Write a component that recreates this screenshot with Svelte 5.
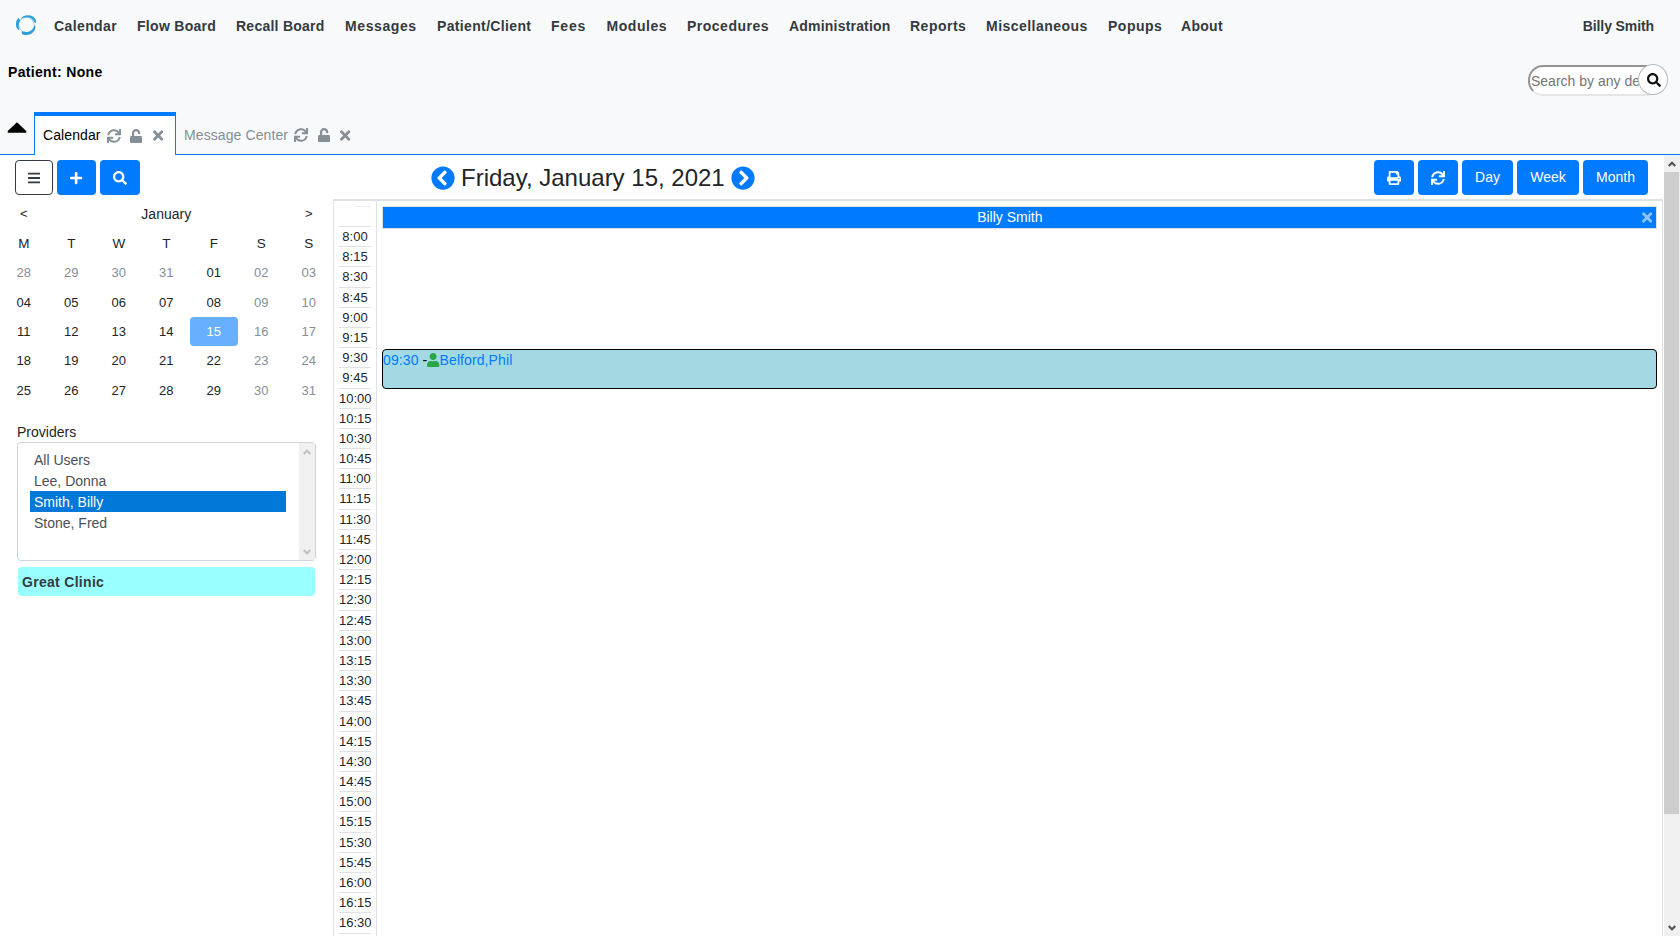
<script>
  // label, slot width and tracking of every top menu entry
  const menu = [
    ['Calendar', 83, .4], ['Flow Board', 99, .3], ['Recall Board', 109, .25], ['Messages', 92, .6],
    ['Patient/Client', 114, .35], ['Fees', 55.5, .8], ['Modules', 80.5, .55], ['Procedures', 102, .5],
    ['Administration', 121, .2], ['Reports', 76, .5], ['Miscellaneous', 122, .47], ['Popups', 73, .5], ['About', 50, .3]
  ];
  const tabs = ['Calendar', 'Message Center'];
  const weekdays = ['M', 'T', 'W', 'T', 'F', 'S', 'S'];
  const days = [28, 29, 30, 31, ...Array.from({ length: 31 }, (_, i) => i + 1)];
  const pad = (n) => String(n).padStart(2, '0');
  const isMuted = (i) => i < 4 || i % 7 > 4;
  const times = Array.from({ length: 35 }, (_, i) => `${8 + Math.floor(i / 4)}:${pad((i % 4) * 15)}`);
  const providers = ['All Users', 'Lee, Donna', 'Smith, Billy', 'Stone, Fred'];

  const icons = {
    sync: [512, 'M440.65 12.57l4 82.77A247.16 247.16 0 0 0 255.83 8C134.73 8 33.91 94.92 12.29 209.82A12 12 0 0 0 24.09 224h49.05a12 12 0 0 0 11.67-9.26 175.91 175.91 0 0 1 317-56.94l-101.46-4.86a12 12 0 0 0-12.57 12v47.41a12 12 0 0 0 12 12H500a12 12 0 0 0 12-12V12a12 12 0 0 0-12-12h-47.37a12 12 0 0 0-11.98 12.57zM255.83 432a175.61 175.61 0 0 1-146-77.8l101.8 4.87a12 12 0 0 0 12.57-12v-47.4a12 12 0 0 0-12-12H12a12 12 0 0 0-12 12V500a12 12 0 0 0 12 12h47.35a12 12 0 0 0 12-12.6l-4.15-82.57A247.17 247.17 0 0 0 255.83 504c121.11 0 221.93-86.92 243.55-201.82a12 12 0 0 0-11.8-14.18h-49.05a12 12 0 0 0-11.67 9.26A175.86 175.86 0 0 1 255.83 432z'],
    unlock: [448, 'M400 256H152V152.9c0-39.6 31.7-72.5 71.3-72.9 40-.4 72.7 32.1 72.7 72v16c0 13.3 10.7 24 24 24h32c13.3 0 24-10.7 24-24v-16C376 68 307.5-.3 223.5 0 139.5.3 72 69.5 72 153.5V256H48c-26.5 0-48 21.5-48 48v160c0 26.5 21.5 48 48 48h352c26.5 0 48-21.5 48-48V304c0-26.5-21.5-48-48-48z'],
    times: [352, 'M242.72 256l100.07-100.07c12.28-12.28 12.28-32.19 0-44.48l-22.24-22.24c-12.28-12.28-32.19-12.28-44.48 0L176 189.28 75.93 89.21c-12.28-12.28-32.19-12.28-44.48 0L9.21 111.45c-12.28 12.28-12.28 32.19 0 44.48L109.28 256 9.21 356.07c-12.28 12.28-12.28 32.19 0 44.48l22.24 22.24c12.28 12.28 32.2 12.28 44.48 0L176 322.72l100.07 100.07c12.28 12.28 32.2 12.28 44.48 0l22.24-22.24c12.28-12.28 12.28-32.19 0-44.48L242.72 256z'],
    bars: [448, 'M16 132h416c8.8 0 16-7.2 16-16V76c0-8.8-7.2-16-16-16H16C7.2 60 0 67.2 0 76v40c0 8.8 7.2 16 16 16zm0 160h416c8.8 0 16-7.2 16-16v-40c0-8.8-7.2-16-16-16H16c-8.8 0-16 7.2-16 16v40c0 8.8 7.2 16 16 16zm0 160h416c8.8 0 16-7.2 16-16v-40c0-8.8-7.2-16-16-16H16c-8.8 0-16 7.2-16 16v40c0 8.8 7.2 16 16 16z'],
    plus: [448, 'M416 208H272V64c0-17.67-14.33-32-32-32h-32c-17.67 0-32 14.33-32 32v144H32c-17.67 0-32 14.33-32 32v32c0 17.67 14.33 32 32 32h144v144c0 17.67 14.33 32 32 32h32c17.67 0 32-14.33 32-32V304h144c17.67 0 32-14.33 32-32v-32c0-17.67-14.33-32-32-32z'],
    search: [512, 'M505 442.7L405.3 343c-4.5-4.5-10.6-7-17-7H372c27.6-35.3 44-79.7 44-128C416 93.1 322.9 0 208 0S0 93.1 0 208s93.1 208 208 208c48.3 0 92.7-16.4 128-44v16.3c0 6.4 2.5 12.5 7 17l99.7 99.7c9.4 9.4 24.6 9.4 33.9 0l28.3-28.3c9.4-9.4 9.4-24.6.1-34zM208 336c-70.7 0-128-57.2-128-128 0-70.7 57.2-128 128-128 70.7 0 128 57.2 128 128 0 70.7-57.2 128-128 128z'],
    print: [512, 'M448 192V77.25c0-8.49-3.37-16.62-9.37-22.63L393.37 9.37c-6-6-14.14-9.37-22.63-9.37H96C78.33 0 64 14.33 64 32v160c-35.35 0-64 28.65-64 64v112c0 8.84 7.16 16 16 16h48v96c0 17.67 14.33 32 32 32h320c17.67 0 32-14.33 32-32v-96h48c8.84 0 16-7.16 16-16V256c0-35.35-28.65-64-64-64zm-64 256H128v-96h256v96zm0-224H128V64h192v48c0 8.84 7.16 16 16 16h48v96zm48 72c-13.25 0-24-10.75-24-24 0-13.26 10.75-24 24-24s24 10.74 24 24c0 13.25-10.75 24-24 24z'],
    chevron: [512, 'M256 504C119 504 8 393 8 256S119 8 256 8s248 111 248 248-111 248-248 248zM142.1 273l135.5 135.5c9.4 9.4 24.6 9.4 33.9 0l17-17c9.4-9.4 9.4-24.6 0-33.9L226.9 256l101.6-101.6c9.4-9.4 9.4-24.6 0-33.9l-17-17c-9.4-9.4-24.6-9.4-33.9 0L142.1 239c-9.4 9.4-9.4 24.6 0 34z'],
    user: [448, 'M224 256c70.7 0 128-57.3 128-128S294.7 0 224 0 96 57.3 96 128s57.3 128 128 128zm89.6 32h-16.7c-22.2 10.2-46.9 16-72.9 16s-50.6-5.8-72.9-16h-16.7C60.2 288 0 348.2 0 422.4V464c0 26.5 21.5 48 48 48h352c26.5 0 48-21.5 48-48v-41.6c0-74.2-60.2-134.4-134.4-134.4z']
  };
</script>

{#snippet icon(name, size = 14)}
  <svg class="icon icon-{name}" viewBox="0 0 {icons[name][0]} 512" width={(size * icons[name][0]) / 512} height={size} fill="currentColor" aria-hidden="true"><path d={icons[name][1]} /></svg>
{/snippet}

<div class="app">
  <header>
    <nav>
      <svg class="logo" viewBox="0 0 20 20" width="20" height="20" fill="#2a9fd8">
        <circle cx="10.5" cy="10" r="7.6" fill="none" stroke="#9fd0ea" stroke-width=".9" />
        <path d="M4 4.500C7-1 16.500-1.500 19.700 4.500l.3 3.500-1.500-.5C16.500 2 9.500.5 4 4.500z" />
        <path d="M2.500 3C-1 6.500-.8 12 2 14.500l1.500 1C2.300 12 2.300 8 4.200 5.300z" />
        <path d="M5.500 17l1-.8c4.500 2 10.500.3 12-6l1 .8c0 6.500-6 10.500-13 8.500z" />
      </svg>
      {#each menu as [label, width, tracking]}
        <a href="#top" style="width: {width}px; letter-spacing: {tracking}px">{label}</a>
      {/each}
      <a class="account" href="#top">Billy Smith</a>
    </nav>
    <div class="patient">
      <strong>Patient: None</strong>
      <div class="search">
        <input placeholder="Search by any demographics" aria-label="Search" />
        <button aria-label="Search">{@render icon('search')}</button>
      </div>
    </div>
    <div class="tabs">
      <svg class="caret" width="34" height="43" viewBox="0 0 34 43"><path d="M17 10.500L7.500 19.500v1.800h19v-1.800z" /></svg>
      {#each tabs as tab, i}
        <div class="tab" class:active={i === 0}>
          <span>{tab}</span>{@render icon('sync')}{@render icon('unlock')}{@render icon('times', 15)}
        </div>
      {/each}
      <div class="fill"></div>
    </div>
  </header>

  <div class="body">
    <main>
      <div class="toolbar">
        <div class="group left">
          <button class="btn outline" aria-label="Menu">{@render icon('bars')}</button>
          <button class="btn plus" aria-label="Add">{@render icon('plus')}</button>
          <button class="btn" aria-label="Find">{@render icon('search')}</button>
        </div>
        <div class="date">
          {@render icon('chevron', 24)}<span>Friday, January 15, 2021</span><i>{@render icon('chevron', 24)}</i>
        </div>
        <div class="group right">
          <button class="btn" aria-label="Print">{@render icon('print')}</button>
          <button class="btn" aria-label="Refresh">{@render icon('sync')}</button>
          <button class="btn day">Day</button>
          <button class="btn week">Week</button>
          <button class="btn month">Month</button>
        </div>
      </div>

      <div class="content">
        <aside>
          <div class="month-grid">
            <span>&lt;</span><span class="name">January</span><span>&gt;</span>
            {#each weekdays as d}<span class="wd">{d}</span>{/each}
            {#each days as d, i}
              <span class:muted={isMuted(i)} class:selected={i === 18}>{pad(d)}</span>
            {/each}
          </div>
          <div class="label">Providers</div>
          <div class="select">
            <ul>
              {#each providers as p}<li class:chosen={p === 'Smith, Billy'}>{p}</li>{/each}
            </ul>
            <div class="mini-scroll">
              <svg width="8" height="6" viewBox="0 0 8 6"><path d="M.7 5L4 1.700 7.300 5" /></svg>
              <svg width="8" height="6" viewBox="0 0 8 6"><path d="M.7 1L4 4.300 7.300 1" /></svg>
            </div>
          </div>
          <div class="clinic">Great Clinic</div>
        </aside>

        <section class="schedule">
          <div class="times">
            <div class="stub"></div>
            {#each times as t}<div class="slot">{t}</div>{/each}
            <div class="slot"></div>
          </div>
          <div class="column">
            <div class="provider"><span>Billy Smith</span>{@render icon('times', 15)}</div>
            <div class="event"><a href="#top">09:30</a>&nbsp;-{@render icon('user')}<a href="#top">Belford,Phil</a></div>
          </div>
        </section>
      </div>
    </main>
    <div class="scrollbar">
      <svg width="8" height="6" viewBox="0 0 8 6"><path d="M.7 5L4 1.700 7.300 5" /></svg>
      <div class="thumb"></div>
      <svg width="8" height="6" viewBox="0 0 8 6"><path d="M.7 1L4 4.300 7.300 1" /></svg>
    </div>
  </div>
</div>

<style>
  :global(body) { margin: 0; overflow: hidden; }
  .app, .app * { box-sizing: border-box; }
  .app { width: 1680px; height: 936px; display: flex; flex-direction: column; overflow: hidden; font: 14px/21px "Liberation Sans", Arial, sans-serif; color: #212529; background: #fff; }
  a { text-decoration: none; }
  button { font: inherit; cursor: pointer; }
  .icon { flex: none; display: block; }

  header { height: 155px; flex: none; background: #f8f9fa; display: flex; flex-direction: column; }
  nav { height: 52px; display: flex; align-items: center; padding: 0 26px 0 16px; font-weight: 700; }
  nav a { flex: none; color: #343a40; white-space: nowrap; }
  .logo { margin: -2px 18px 0 0; flex: none; }
  nav .account { margin-left: auto; letter-spacing: -.1px; }
  .patient { height: 60px; display: flex; justify-content: space-between; padding: 10px 12px 0 8px; color: #000; }
  .patient strong { letter-spacing: .33px; }
  .search { display: flex; margin-top: 2px; height: 32px; }
  .search input { width: 134px; height: 31px; margin: 1px 0 0; padding: 0 1px; border: 2px solid; border-color: #949494 #e5e5e5 #e5e5e5 #949494; border-radius: 15px; font: inherit; color: #555; background: #fff; }
  .search input::placeholder { color: #757575; opacity: 1; }
  .search button { width: 30px; height: 31px; margin-left: -24px; padding: 0 0 0 1px; display: grid; place-items: center; border: 1px solid #b4bac2; border-radius: 50%; background: #fff; color: #111; }

  .tabs { height: 43px; display: flex; align-items: stretch; color: #868e96; }
  .caret { flex: none; width: 34px; height: 43px; border-bottom: 1px solid #007bff; }
  .tab { display: flex; align-items: center; padding: 4px 8px 0; border-bottom: 1px solid #007bff; }
  .tab span { margin-right: 6px; letter-spacing: .1px; }
  .tab .icon-unlock { margin-left: 9.5px; }
  .tab .icon-times { margin-left: 10.5px; }
  .tab.active { width: 142px; border: 1px solid #007bff; border-width: 4px 1px 0; padding-top: 0; background: #fff; }
  .tab.active span { color: #000; }
  .fill { flex: 1; border-bottom: 1px solid #007bff; }

  .body { flex: 1; min-height: 0; display: flex; }
  main { width: 1663px; display: flex; flex-direction: column; margin-right: 1px; }
  .toolbar { height: 44px; flex: none; display: flex; align-items: flex-start; padding: 5px 15px 0; }
  .group { display: flex; gap: 4px; }
  .left { width: 415.5px; }
  .btn { width: 40px; height: 35px; padding: 0; display: flex; justify-content: center; align-items: center; border: 0; border-radius: 4px; background: #007bff; color: #fff; }
  .btn.outline { width: 38px; border: 1px solid #343a40; background: #fff; color: #343a40; }
  .btn.plus { width: 39px; }
  .btn.day { width: 51px; }
  .btn.week { width: 62px; }
  .btn.month { width: 65px; }
  .date { display: flex; align-items: center; height: 35px; font-size: 24px; }
  .date .icon { color: #007bff; }
  .date span { margin: 0 6.5px; white-space: nowrap; }
  .date i { transform: scaleX(-1); }
  .right { margin-left: auto; }

  .content { flex: 1; min-height: 0; display: flex; }
  aside { width: 333px; flex: none; }
  .month-grid { display: grid; grid-template-columns: repeat(7, 47.5px); grid-auto-rows: 29.4px; padding-top: .4px; font-size: 13px; line-height: 30px; text-align: center; }
  .name { grid-column: span 5; font-size: 14px; }
  .wd { font-size: 13.5px; line-height: 29px; }
  .muted { color: #868e96; }
  .selected { background: #66b0ff; color: #fff; border-radius: 4px; }
  .label { margin: 17px 0 0 17px; }
  .select { width: 299px; height: 119px; margin: -1px 0 0 17px; display: flex; justify-content: space-between; border: 1px solid #ced4da; border-radius: 4px; color: #495057; }
  ul { list-style: none; width: 256px; margin: 6px 0 0 12px; padding: 0; }
  li { padding-left: 4px; line-height: 22px; height: 21px; }
  .chosen { background: #0078d7; color: #fff; }
  .mini-scroll { width: 16px; background: #f0f0f0; display: flex; flex-direction: column; align-items: center; justify-content: space-between; padding: 6px 0 5px; }
  .mini-scroll path { fill: none; stroke: #bfbfbf; stroke-width: 2; }
  .clinic { width: 297px; height: 29px; margin: 6px 0 0 18px; padding-left: 4px; line-height: 30px; border-radius: 4px; background: #9ff; color: #343a40; font-weight: 700; letter-spacing: .3px; }

  .schedule { flex: 1; display: flex; border: 1px solid #dee2e6; border-width: 2px 1px 0; overflow: hidden; }
  .times { width: 43px; flex: none; border-right: 1px solid #dee2e6; padding: 5px 5px 0; font-size: 13px; text-align: center; }
  .stub { width: 15px; height: 20px; margin-left: 17px; border-top: 1px solid #eee; }
  .slot { height: 20.2px; line-height: 19px; border-top: 1px solid #dee2e6; }
  .column { flex: 1; padding: 5px 5px 0; }
  .provider { height: 23px; display: flex; align-items: center; justify-content: center; border: 1px solid #dee2e6; background: #007bff; color: #fff; }
  .provider span { flex: 1; text-align: center; padding-right: 5px; }
  .provider .icon { margin-right: 4px; color: #8cc4ff; }
  .event { height: 40px; margin-top: 120px; display: flex; align-items: flex-start; border: 1px solid #000; border-radius: 4px; background: #a3d9e2; color: #000; letter-spacing: .1px; }
  .event a { color: #007bff; }
  .event .icon { color: #28a745; margin-top: 3px; }

  .scrollbar { width: 16px; background: #f0f0f0; display: flex; flex-direction: column; align-items: center; padding: 6px 0 5px; }
  .scrollbar path { fill: none; stroke: #505050; stroke-width: 2; }
  .thumb { width: 15px; height: 642px; margin: 5px 1px auto 0; background: #cdcdcd; }
</style>
